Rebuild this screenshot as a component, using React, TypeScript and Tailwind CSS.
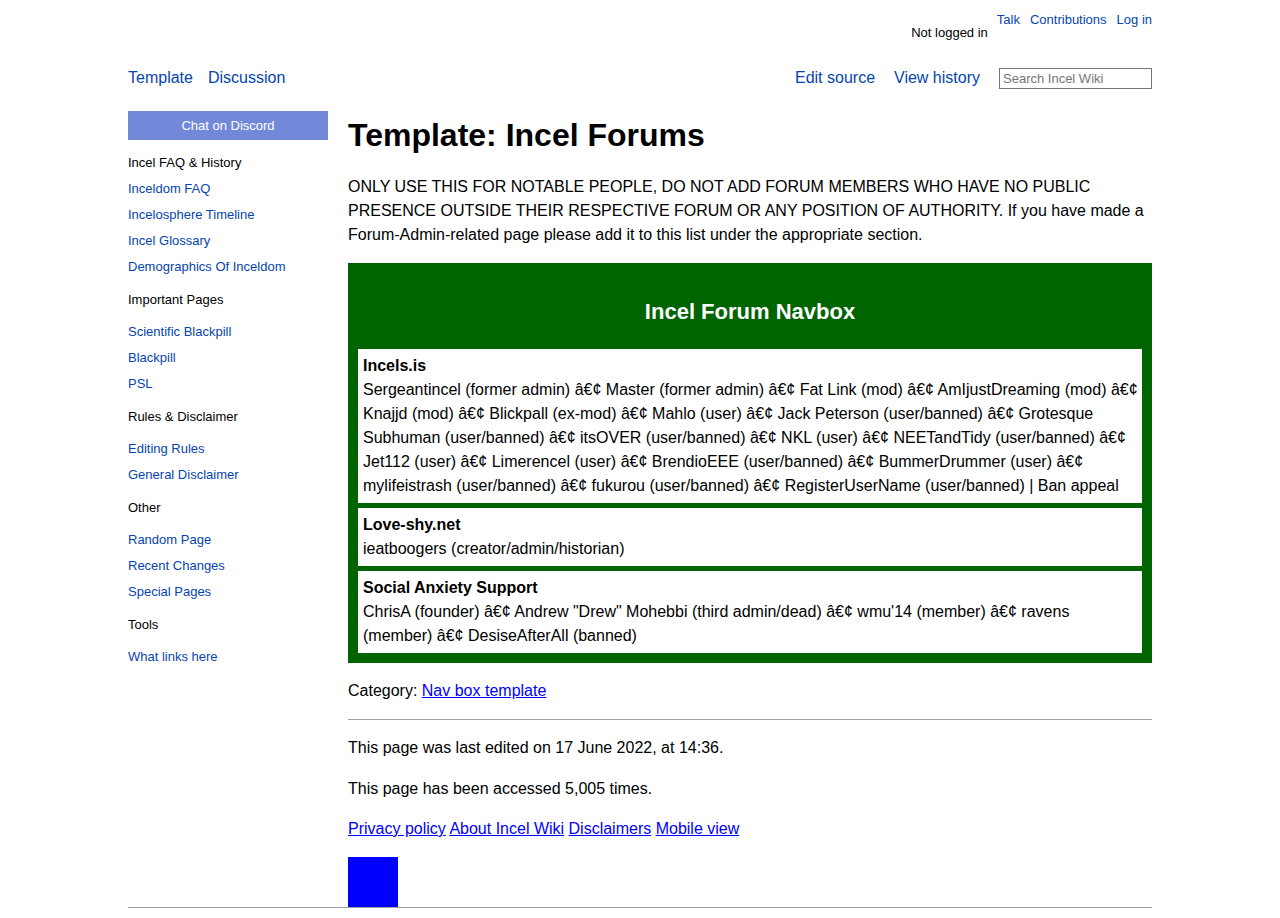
import React from "react";

const B = "\u00e2\u20ac\u00a2";

const sidebar: { heading: string; links: string[] }[] = [
  { heading: "Incel FAQ & History", links: ["Inceldom FAQ", "Incelosphere Timeline", "Incel Glossary", "Demographics Of Inceldom"] },
  { heading: "Important Pages", links: ["Scientific Blackpill", "Blackpill", "PSL"] },
  { heading: "Rules & Disclaimer", links: ["Editing Rules", "General Disclaimer"] },
  { heading: "Other", links: ["Random Page", "Recent Changes", "Special Pages"] },
  { heading: "Tools", links: ["What links here"] },
];

const cells: { title: string; items: string[] }[] = [
  {
    title: "Incels.is",
    items: [
      "Sergeantincel (former admin)",
      "Master (former admin)",
      "Fat Link (mod)",
      "AmIjustDreaming (mod)",
      "Knajjd (mod)",
      "Blickpall (ex-mod)",
      "Mahlo (user)",
      "Jack Peterson (user/banned)",
      "Grotesque Subhuman (user/banned)",
      "itsOVER (user/banned)",
      "NKL (user)",
      "NEETandTidy (user/banned)",
      "Jet112 (user)",
      "Limerencel (user)",
      "BrendioEEE (user/banned)",
      "BummerDrummer (user)",
      "mylifeistrash (user/banned)",
      "fukurou (user/banned)",
      "RegisterUserName (user/banned) | Ban appeal",
    ],
  },
  { title: "Love-shy.net", items: ["ieatboogers (creator/admin/historian)"] },
  {
    title: "Social Anxiety Support",
    items: [
      "ChrisA (founder)",
      'Andrew "Drew" Mohebbi (third admin/dead)',
      "wmu'14 (member)",
      "ravens (member)",
      "DesiseAfterAll (banned)",
    ],
  },
];

export default function App() {
  return (
    <div className="min-h-[918px] bg-white text-black" style={{ fontFamily: '"Liberation Sans", Arial, sans-serif' }}>
      <div className="mx-auto w-[1024px]">
        {/* personal tools */}
        <div className="flex justify-end items-start pt-[12px] h-[57px] text-[13px] leading-[16px]">
          <span className="mt-[13px] mr-[9px]">Not logged in</span>
          <a className="text-[#0645ad] mr-[10px]">Talk</a>
          <a className="text-[#0645ad] mr-[10px]">Contributions</a>
          <a className="text-[#0645ad]">Log in</a>
        </div>

        {/* tabs */}
        <div className="flex items-center justify-between h-[42px] text-[16px]">
          <div className="flex gap-[15px] text-[#0645ad]">
            <a>Template</a>
            <a>Discussion</a>
          </div>
          <div className="flex items-center">
            <a className="text-[#0645ad] mr-[19px]">Edit source</a>
            <a className="text-[#0645ad] mr-[19px]">View history</a>
            <input
              placeholder="Search Incel Wiki"
              className="w-[153px] h-[21px] border border-[#767676] px-[3px] text-[13px] placeholder:text-[#757575] outline-none"
              style={{ fontFamily: '"Liberation Sans", Arial, sans-serif' }}
            />
          </div>
        </div>

        <div className="flex gap-[20px] pt-[12px]">
          {/* sidebar */}
          <div className="w-[200px] shrink-0 text-[13px]">
            <div className="h-[29px] bg-[#7289da] text-white flex items-center justify-center">Chat on Discord</div>
            {sidebar.map((s, i) => (
              <div key={s.heading} className={i === 0 ? "mt-[10px]" : "mt-[7px]"}>
                <div className={`h-[26px] leading-[26px] ${i === 0 ? "" : "mb-[6px]"}`}>{s.heading}</div>
                {s.links.map((l) => (
                  <div key={l} className="h-[26px] leading-[26px] text-[#0645ad]">
                    {l}
                  </div>
                ))}
              </div>
            ))}
          </div>

          {/* content */}
          <div className="w-[804px] text-[16px] leading-[24px]">
            <h1 className="text-[32px] leading-[48px] font-bold">Template: Incel Forums</h1>
            <p className="mt-[16px]">
              ONLY USE THIS FOR NOTABLE PEOPLE, DO NOT ADD FORUM MEMBERS WHO HAVE NO PUBLIC PRESENCE OUTSIDE THEIR RESPECTIVE FORUM OR ANY POSITION OF AUTHORITY. If you have made a Forum-Admin-related page please add it to this list under the appropriate section.
            </p>

            <div className="mt-[16px] bg-[#006400] px-[10px] pb-[10px]">
              <div className="h-[86px] pt-[12px] flex items-center justify-center text-white font-bold text-[22px] leading-[26px]">
                Incel Forum Navbox
              </div>
              <div className="flex flex-col gap-[5px]">
                {cells.map((c) => (
                  <div key={c.title} className="bg-white pl-[5px] pr-[1px] py-[5px]">
                    <div className="font-bold">{c.title}</div>
                    <div>
                      {c.items.map((it, idx) => (
                        <React.Fragment key={idx}>
                          {idx > 0 && (
                            <>
                              {" "}
                              <span className="whitespace-nowrap">{B}</span>{" "}
                            </>
                          )}
                          {it}
                        </React.Fragment>
                      ))}
                    </div>
                  </div>
                ))}
              </div>
            </div>

            <p className="mt-[16px]">
              Category: <a className="text-[#0000ff] underline">Nav box template</a>
            </p>
            <div className="mt-[16px] h-px bg-[#a0a0a0]" />
            <p className="mt-[16px]">This page was last edited on 17 June 2022, at 14:36.</p>
            <p className="mt-[17px]">This page has been accessed 5,005 times.</p>
            <p className="mt-[16px]">
              <a className="text-[#0000ff] underline">Privacy policy</a>{" "}
              <a className="text-[#0000ff] underline">About Incel Wiki</a>{" "}
              <a className="text-[#0000ff] underline">Disclaimers</a>{" "}
              <a className="text-[#0000ff] underline">Mobile view</a>
            </p>
            <div className="mt-[16px] w-[50px] h-[50px] bg-[#0000ff]" />
          </div>
        </div>
        <div className="h-px bg-[#a0a0a0]" />
      </div>
    </div>
  );
}
